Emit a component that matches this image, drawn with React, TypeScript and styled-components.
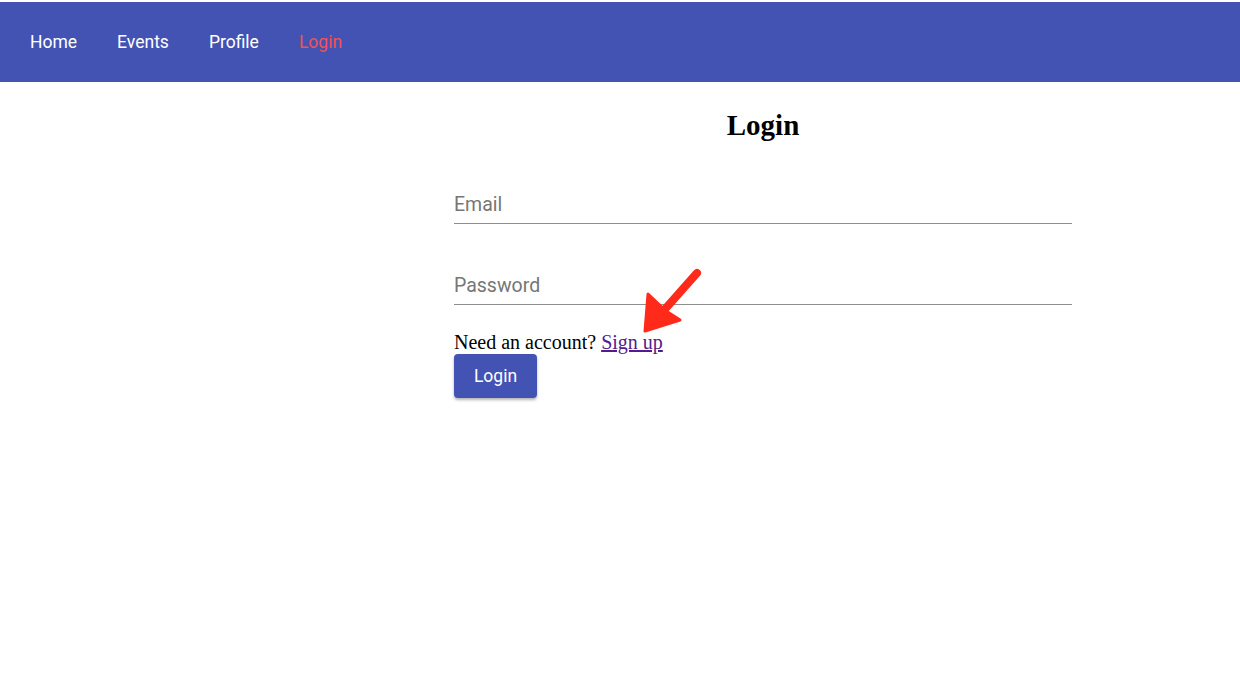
import React from "react";
import styled, { createGlobalStyle } from "styled-components";

const Global = createGlobalStyle`
  html, body { margin: 0; padding: 0; background: #fff; }
  body { font-family: "Liberation Serif", "Times New Roman", serif; }
`;

const Page = styled.div`
  padding-top: 2px;
  width: 1240px;
  height: 689px;
  position: relative;
`;

const Bar = styled.nav`
  height: 80px;
  background: #4353b3;
  display: flex;
  align-items: center;
  padding-left: 30px;
  padding-top: 2px;
  box-sizing: border-box;
  gap: 40px;
`;

const NavItem = styled.a<{ $active?: boolean }>`
  font-family: Roboto, "Noto Sans", sans-serif;
  font-size: 17.5px;
  color: ${(p) => (p.$active ? "#ef5350" : "#ffffff")};
  text-decoration: none;
  line-height: 1;
`;

const Main = styled.main`
  margin-left: 454px;
  width: 618px;
  display: flex;
  flex-direction: column;
`;

const Title = styled.h1`
  font-family: "Liberation Serif", "Times New Roman", serif;
  font-weight: bold;
  font-size: 29px;
  text-align: center;
  margin: 24px 0 0;
  line-height: 38px;
`;

const Field = styled.div<{ $top: number }>`
  margin-top: ${(p) => p.$top}px;
  border-bottom: 1.5px solid #8f8f8f;
  height: 40px;
  display: flex;
  align-items: flex-end;
  padding-bottom: 9px;
  box-sizing: border-box;
`;

const Label = styled.span`
  font-family: Roboto, "Noto Sans", sans-serif;
  font-size: 19.5px;
  color: #767676;
  line-height: 1;
`;

const Hint = styled.p`
  margin: 26px 0 0;
  font-size: 20px;
  line-height: 22px;
  color: #000;
`;

const SignUp = styled.a`
  color: #551a8b;
  text-decoration: underline;
`;

const Button = styled.button`
  margin-top: 1px;
  width: 83px;
  height: 44px;
  border: none;
  border-radius: 4px;
  background: #4353b3;
  color: #fff;
  font-family: Roboto, "Noto Sans", sans-serif;
  font-size: 17.5px;
  box-shadow: 0 2px 3px rgba(0, 0, 0, 0.3);
  padding: 0;
`;

const Arrow = styled.svg`
  position: absolute;
  left: 636px;
  top: 264px;
`;

export default function App() {
  return (
    <Page>
      <Global />
      <Bar>
        <NavItem>Home</NavItem>
        <NavItem>Events</NavItem>
        <NavItem>Profile</NavItem>
        <NavItem $active>Login</NavItem>
      </Bar>
      <Main>
        <Title>Login</Title>
        <Field $top={40}>
          <Label>Email</Label>
        </Field>
        <Field $top={41}>
          <Label>Password</Label>
        </Field>
        <Hint>
          Need an account? <SignUp href="#">Sign up</SignUp>
        </Hint>
        <div>
          <Button>Login</Button>
        </div>
      </Main>
      <Arrow width="70" height="72" viewBox="0 0 70 72">
        <path d="M61 9 L30 44" stroke="#ff2a1a" strokeWidth="8" strokeLinecap="round" fill="none" />
        <path d="M12 30 L9 67 L44 56 L30 47 Z" fill="#ff2a1a" stroke="#ff2a1a" strokeWidth="3" strokeLinejoin="round" />
      </Arrow>
    </Page>
  );
}
